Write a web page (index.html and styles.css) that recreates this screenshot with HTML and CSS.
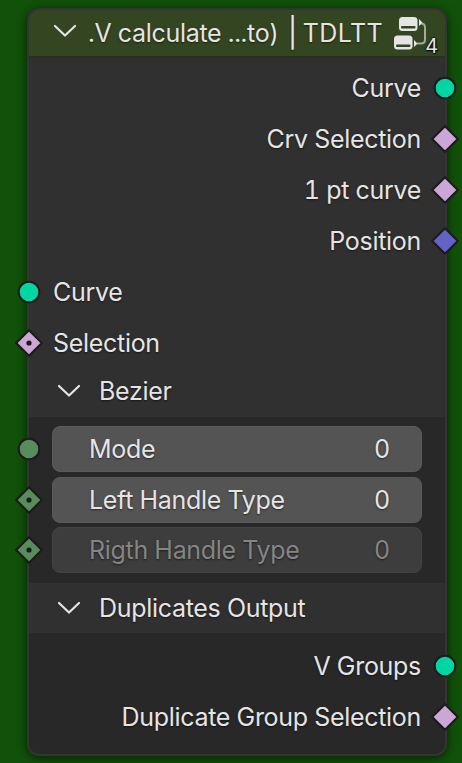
FILE: index.html
```html
<!DOCTYPE html>
<html lang="en">
<head>
<meta charset="utf-8">
<title>Node</title>
<link rel="stylesheet" href="styles.css">
</head>
<body>
<main class="node">
  <header class="node-header">
    <svg class="chevron" width="24" height="16" viewBox="0 0 24 16"><path d="M2 3l10 9.500L22 3"/></svg>
    <h1 class="title"><span>.V calculate ...to)</span><span class="pipe">|</span><span class="suffix">TDLTT</span></h1>
    <svg class="group-icon" width="36" height="36" viewBox="0 0 36 36">
      <path class="link" d="M27 8.500h1q4 0 4 4v12q0 4-4 4h-4"/>
      <path class="tip" d="M26 4v7l3.500-3.500zM21 25v7l3.500-3.500z"/>
      <rect class="block" x="6" y="2" width="18.500" height="14" rx="3.500"/>
      <rect class="slot" x="8" y="11" width="14.500" height="2.500" rx="1"/>
      <rect class="block" x="1" y="20.500" width="18.500" height="14" rx="3.500"/>
      <rect class="slot" x="3" y="29.500" width="14.500" height="2.500" rx="1"/>
    </svg>
    <span class="users">4</span>
  </header>

  <section class="sockets">
    <div class="row out"><span>Curve</span><svg class="socket teal" viewBox="0 0 28 28"><circle cx="14" cy="14" r="10.300"/></svg></div>
    <div class="row out"><span>Crv Selection</span><svg class="socket pink" viewBox="0 0 28 28"><path d="M14 1.200L26.800 14 14 26.800 1.200 14z"/></svg></div>
    <div class="row out"><span>1 pt curve</span><svg class="socket pink" viewBox="0 0 28 28"><path d="M14 1.200L26.800 14 14 26.800 1.200 14z"/></svg></div>
    <div class="row out"><span>Position</span><svg class="socket blue" viewBox="0 0 28 28"><path d="M14 1.200L26.800 14 14 26.800 1.200 14z"/></svg></div>
    <div class="row in"><svg class="socket teal" viewBox="0 0 28 28"><circle cx="14" cy="14" r="10.300"/></svg><span>Curve</span></div>
    <div class="row in"><svg class="socket pink" viewBox="0 0 28 28"><path d="M14 1.200L26.800 14 14 26.800 1.200 14z"/><circle class="dot" cx="14" cy="14" r="2.600"/></svg><span>Selection</span></div>
  </section>

  <section class="panel">
    <h2 class="panel-header bezier"><svg class="chevron" width="24" height="16" viewBox="0 0 24 16"><path d="M2 3l10 9.500L22 3"/></svg><span>Bezier</span></h2>
    <div class="panel-body fields">
      <div class="row in"><svg class="socket green" viewBox="0 0 28 28"><circle cx="14" cy="14" r="10.300"/></svg><div class="field"><span>Mode</span><span>0</span></div></div>
      <div class="row in"><svg class="socket green" viewBox="0 0 28 28"><path d="M14 1.200L26.800 14 14 26.800 1.200 14z"/><circle class="dot" cx="14" cy="14" r="2.600"/></svg><div class="field"><span>Left Handle Type</span><span>0</span></div></div>
      <div class="row in"><svg class="socket green" viewBox="0 0 28 28"><path d="M14 1.200L26.800 14 14 26.800 1.200 14z"/><circle class="dot" cx="14" cy="14" r="2.600"/></svg><div class="field disabled"><span>Rigth Handle Type</span><span>0</span></div></div>
    </div>
  </section>

  <section class="panel last">
    <h2 class="panel-header"><svg class="chevron" width="24" height="16" viewBox="0 0 24 16"><path d="M2 3l10 9.500L22 3"/></svg><span>Duplicates Output</span></h2>
    <div class="panel-body outputs">
      <div class="row out"><span>V Groups</span><svg class="socket teal" viewBox="0 0 28 28"><circle cx="14" cy="14" r="10.300"/></svg></div>
      <div class="row out"><span>Duplicate Group Selection</span><svg class="socket pink" viewBox="0 0 28 28"><path d="M14 1.200L26.800 14 14 26.800 1.200 14z"/></svg></div>
    </div>
  </section>
</main>
</body>
</html>
```
FILE: styles.css
```css
* { box-sizing: border-box; }
body {
  margin: 0;
  height: 763px;
  padding: 8px 15px 7px 27px;
  overflow: hidden;
  background: #115109;
  color: #e5e5e5;
  font: 400 25px/30px Inter, "Liberation Sans", sans-serif;
  font-variant-numeric: tabular-nums;
  letter-spacing: -0.3px;
  text-shadow: 0 1px 2px rgba(0, 0, 0, 0.55);
}
h1, h2 { margin: 0; font: inherit; font-variant-numeric: inherit; }
span { white-space: nowrap; }
.node {
  display: flex;
  flex-direction: column;
  width: 420px;
  height: 748px;
  border: 2px solid #343434;
  border-radius: 12px;
  background: #303030;
  box-shadow: 0 2px 10px rgba(0, 0, 0, 0.6);
}
.node-header {
  position: relative;
  display: flex;
  align-items: center;
  height: 48px;
  padding-left: 24px;
  border-bottom: 2px solid #283219;
  border-radius: 10px 10px 0 0;
  background: #344621;
}
.chevron { flex: none; fill: none; stroke: #e5e5e5; stroke-width: 2.2; stroke-linecap: round; stroke-linejoin: round; }
.node-header .chevron { margin-top: -4px; }
.title { display: flex; align-items: center; margin-left: 11px; width: 295px; }
.pipe { width: 8px; margin: 0 7px 0 9px; font-size: 29px; text-align: center; }
.suffix { letter-spacing: 0.4px; }
.group-icon { flex: none; margin-left: 10px; }
.link { fill: none; stroke: #a3aa9a; stroke-width: 2; }
.tip { fill: #e5e5e5; }
.block { fill: #e5e5e5; }
.slot { fill: #344621; }
.users {
  position: absolute;
  right: 7px;
  bottom: -2px;
  font-size: 20px;
  line-height: 24px;
  text-shadow: 0 0 2px #000, 0 0 2px #000, 1px 1px 1px #000;
}
.sockets { padding-top: 4px; height: 309px; }
.row { display: flex; align-items: center; height: 51px; }
.out { justify-content: flex-end; margin-right: -14px; gap: 10px; }
.in { margin-left: -14px; gap: 10px; }
.socket { flex: none; width: 28px; height: 28px; stroke: #1b1b1b; stroke-width: 2; }
.socket .dot { fill: #1b1b1b; stroke: none; }
.teal { fill: #00d6a3; }
.pink { fill: #cca6d6; }
.blue { fill: #6363c7; }
.green { fill: #598c5c; }
.panel-header { display: flex; align-items: center; gap: 18px; height: 50px; padding-left: 28px; }
.panel-header.bezier { padding-bottom: 2px; }
.panel-body { background: #282828; }
.fields { height: 166px; padding-top: 7px; }
.fields .row { height: 50.5px; gap: 9px; }
.field {
  display: flex;
  flex: none;
  align-items: center;
  justify-content: space-between;
  width: 370px;
  height: 46px;
  padding: 0 31px 0 36px;
  border: 1px solid #5a5a5a;
  border-radius: 8px;
  background: #545454;
}
.disabled { border-color: #424242; background: #3d3d3d; color: #858585; }
.panel.last { flex: 1; display: flex; flex-direction: column; }
.outputs { flex: 1; padding-top: 7px; border-radius: 0 0 10px 10px; }
```
